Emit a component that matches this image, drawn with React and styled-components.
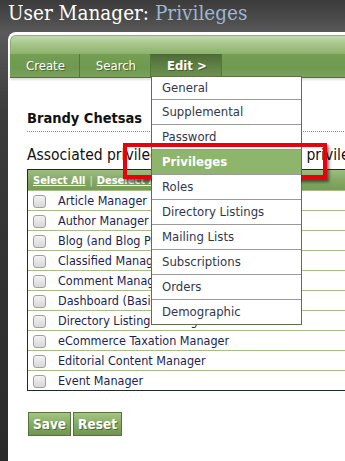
import styled, { createGlobalStyle } from "styled-components";

const sans = `"DejaVu Sans Condensed", "DejaVu Sans", Verdana, sans-serif`;

const GlobalStyle = createGlobalStyle`
  html, body {
    margin: 0;
    padding: 0;
    height: 100%;
    overflow: hidden;
  }
  body {
    background: linear-gradient(180deg, #3b3b3b 0px, #4a4a4a 18px, #5a5a5a 32px, #3c3c3c 110px, #333 260px, #2a2a2a 100%);
    font-family: ${sans};
  }
`;

const MENU = [
  "General",
  "Supplemental",
  "Password",
  "Privileges",
  "Roles",
  "Directory Listings",
  "Mailing Lists",
  "Subscriptions",
  "Orders",
  "Demographic",
];

const PRIVILEGES = [
  "Article Manager",
  "Author Manager",
  "Blog (and Blog Post) Manager",
  "Classified Manager",
  "Comment Manager",
  "Dashboard (Basic)",
  "Directory Listings Manager",
  "eCommerce Taxation Manager",
  "Editorial Content Manager",
  "Event Manager",
];

const App = () => {
  return (
    <Page>
      <GlobalStyle />
      <Title>
        User Manager: <TitleAccent>Privileges</TitleAccent>
      </Title>
      <Panel>
        <Band>
          <BandTop />
          <Nav>
            <NavItem>Create</NavItem>
            <NavItem>Search</NavItem>
            <NavItem $active>
              Edit &gt;
              <Dropdown>
                {MENU.map((label) => (
                  <MenuItem key={label} $current={label === "Privileges"}>
                    {label}
                    {label === "Privileges" && <Callout />}
                  </MenuItem>
                ))}
              </Dropdown>
            </NavItem>
          </Nav>
        </Band>
        <Content>
          <UserName>Brandy Chetsas</UserName>
          <Intro>
            Associated privileges for this user. Give privileges to the account below.
          </Intro>
          <Table>
            <HeadRow>
              <HeadLink>Select All</HeadLink>
              <Pipe>|</Pipe>
              <HeadLink>Deselect All</HeadLink>
            </HeadRow>
            {PRIVILEGES.map((name) => (
              <Row key={name}>
                <Check type="checkbox" />
                <RowLabel>{name}</RowLabel>
              </Row>
            ))}
          </Table>
          <Buttons>
            <Button>Save</Button>
            <Button>Reset</Button>
          </Buttons>
        </Content>
      </Panel>
    </Page>
  );
};

const Page = styled.div`
  min-height: 100vh;
  width: 760px;
`;

const Title = styled.h1`
  margin: 0;
  height: 32px;
  padding: 0 0 0 8px;
  font-family: "DejaVu Serif Condensed", "DejaVu Serif", Georgia, serif;
  font-weight: normal;
  font-size: 20.5px;
  line-height: 26px;
  color: #fff;
  white-space: nowrap;
`;

const TitleAccent = styled.span`
  color: #9bb7d6;
`;

const Panel = styled.div`
  margin-left: 8px;
  background: #fff;
  border-radius: 8px 0 0 0;
  padding: 3px 0 0 2px;
  min-height: 440px;
`;

const Band = styled.div`
  border-radius: 6px 0 0 0;
  box-shadow: 0 2px 2px rgba(0, 0, 0, 0.12);
`;

const BandTop = styled.div`
  height: 18px;
  border-radius: 6px 0 0 0;
  border-top: 1px solid #8fb075;
  border-left: 1px solid #8fb075;
  background: linear-gradient(180deg, #c3dbae 0%, #a6c68a 45%, #8db26c 100%);
`;

const Nav = styled.div`
  display: flex;
  height: 23px;
  background: linear-gradient(180deg, #769f55 0%, #6f9850 60%, #7aa25a 100%);
  border-bottom: 1px solid #4f7034;
`;

const NavItem = styled.div`
  position: relative;
  display: flex;
  align-items: center;
  padding: 0 14px 0 16px;
  border-right: 1px solid #4f7a33;
  color: #fff;
  font-size: 13px;
  font-weight: ${(p) => (p.$active ? "bold" : "normal")};
  text-shadow: 1px 1px 0 rgba(40, 60, 20, 0.55);
  background: ${(p) =>
    p.$active ? "linear-gradient(180deg, #4e6a36 0%, #5f8043 50%, #6d9350 100%)" : "transparent"};
`;

const Dropdown = styled.div`
  position: absolute;
  top: calc(100% - 1px);
  left: 0;
  width: 149px;
  background: #fff;
  border: 1px solid #5f6f4a;
  z-index: 5;
  text-shadow: none;
`;

const MenuItem = styled.div`
  position: relative;
  height: 24px;
  line-height: 24px;
  padding-left: 10px;
  font-size: 13px;
  font-weight: ${(p) => (p.$current ? "bold" : "normal")};
  color: ${(p) => (p.$current ? "#fff" : "#33364a")};
  background: ${(p) => (p.$current ? "#8db56b" : "#fff")};
  border-top: 1px solid #9a9a9a;

  &:first-child {
    height: 22px;
    line-height: 22px;
    border-top: none;
  }
`;

const Callout = styled.span`
  position: absolute;
  left: -29px;
  right: -26px;
  top: -7px;
  bottom: -5px;
  border: 4px solid #e8000b;
  box-shadow: 2px 3px 3px rgba(0, 0, 0, 0.55);
  pointer-events: none;
`;

const Content = styled.div`
  padding: 32px 0 0 17px;
`;

const UserName = styled.h2`
  margin: 0;
  padding-bottom: 4px;
  border-bottom: 1px dotted #8a8a8a;
  font-size: 14.5px;
  line-height: 17px;
  font-weight: bold;
  color: #111;
`;

const Intro = styled.p`
  margin: 14px 0 0;
  font-size: 15.5px;
  line-height: 19px;
  color: #111;
  white-space: nowrap;
`;

const Table = styled.div`
  margin-top: 4px;
  width: 520px;
  border: 1px solid #1d2b2b;
`;

const HeadRow = styled.div`
  display: flex;
  align-items: center;
  gap: 4px;
  height: 20px;
  padding-left: 5px;
  background: linear-gradient(180deg, #9cbd80 0%, #86aa66 50%, #769c56 100%);
  font-size: 11px;
  font-weight: bold;
`;

const HeadLink = styled.span`
  color: #fff;
  text-decoration: underline;
`;

const Pipe = styled.span`
  color: #d8e6c8;
  font-weight: normal;
`;

const Row = styled.div`
  display: flex;
  align-items: center;
  height: 19px;
  padding-left: 5px;
  border-top: 1px solid #a6bd86;
`;

const Check = styled.input`
  appearance: none;
  margin: 1px 12px 0 0;
  width: 13px;
  height: 13px;
  border: 1px solid #a0a0a0;
  border-radius: 3px;
  background: linear-gradient(180deg, #f2f2f2 0%, #d8d8d8 100%);
`;

const RowLabel = styled.span`
  font-size: 12.5px;
  color: #1d1f4d;
  white-space: nowrap;
`;

const Buttons = styled.div`
  display: flex;
  gap: 2px;
  margin-top: 21px;
  padding-left: 1px;
`;

const Button = styled.button`
  height: 24px;
  padding: 0 4px;
  border: 1px solid #56733c;
  background: linear-gradient(180deg, #a4c585 0%, #86ab65 50%, #6f9550 100%);
  color: #fff;
  font-family: ${sans};
  font-size: 13.5px;
  font-weight: bold;
  text-shadow: 1px 1px 0 rgba(60, 60, 20, 0.6);
  cursor: pointer;
`;

export default App;
